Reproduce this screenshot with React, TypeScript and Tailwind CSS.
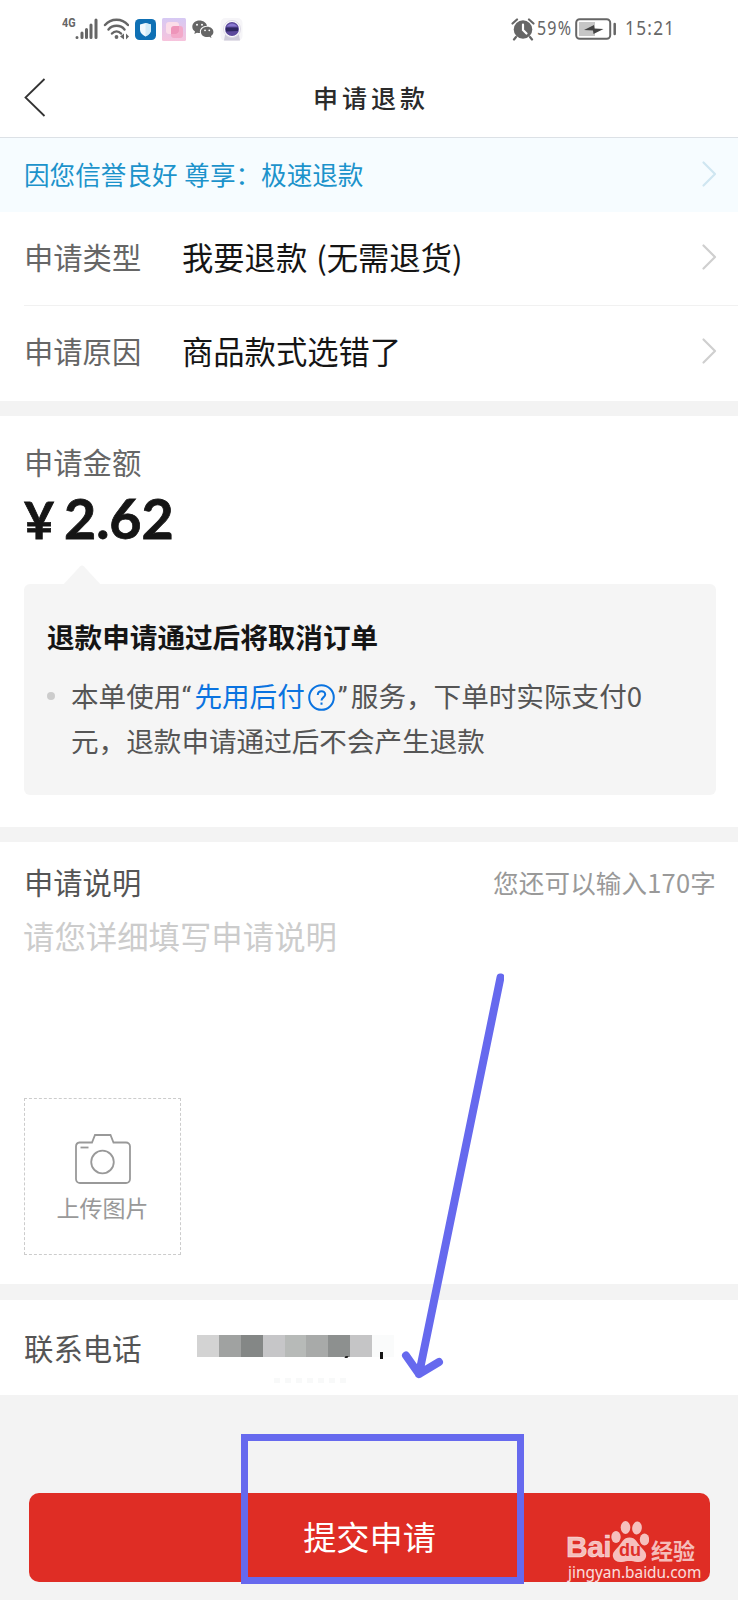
import type React from "react";

interface ChevronProps {
  className?: string;
}

interface FormRowProps {
  label: string;
  value: string;
}

interface DividerProps {
  className?: string;
}

const MOSAIC = [
  "bg-[#d3d3d3]",
  "bg-[#a0a2a1]",
  "bg-[#848786]",
  "bg-[#c6c6c8]",
  "bg-[#b7bab8]",
  "bg-[#a8aaa9]",
  "bg-[#8d908f]",
  "bg-[#c5c5c6]",
  "bg-[#fafbfb]",
];

function Chevron({ className }: ChevronProps): React.ReactNode {
  return (
    <svg width="16" height="28" viewBox="0 0 16 28" fill="none" className={className}>
      <path
        d="M2.500 2.500 14 14 2.500 25.500"
        stroke="currentColor"
        strokeWidth="2.200"
        strokeLinecap="round"
        strokeLinejoin="round"
      />
    </svg>
  );
}

function StatusBar(): React.ReactNode {
  return (
    <div className="flex h-[60px] items-start justify-between pl-[62px] pr-[64px] pt-[17px] text-[#666]">
      <div className="flex items-start">
        <span className="w-[13px] origin-left scale-x-90 font-['Roboto'] text-[12px] font-bold leading-[13px]">4G</span>
        <svg width="24" height="24" viewBox="0 0 24 24" stroke="currentColor" strokeWidth="3" strokeLinecap="round">
          <path d="M2 20.500v0M7 16v4.500M11.500 12.500v8M16 8v12.500M21 3v17.500" />
        </svg>
        <svg width="26" height="24" viewBox="0 0 26 24" fill="none" stroke="currentColor" strokeWidth="2.400" strokeLinecap="round" className="ml-[4px]">
          <path d="M2 8C8 1 19 1 25 8M5.500 12.500c4-5 12-5 16 0M9 16.500c2.500-2.800 6.500-2.800 9 0" />
          <circle cx="13.500" cy="20" r="1.900" fill="currentColor" stroke="none" />
          <path d="M21 16.500v6l-4-3zM23 16.500v6l3-3z" fill="currentColor" stroke="none" />
        </svg>
        <svg width="22" height="24" viewBox="0 0 22 24" className="ml-[6px]">
          <rect y="2" width="21" height="21" rx="4.500" fill="#0f70b4" />
          <path d="M10.500 6 16 7.500v5.500c0 3-2.500 5-5.500 6.500C7.500 18 5 16 5 13V7.500z" fill="#f2fafe" />
          <path d="M10.500 6 16 7.500v5.500c0 3-2.500 5-5.500 6.500z" fill="#d3ecf8" />
        </svg>
        <svg width="24" height="25" viewBox="0 0 24 25" className="ml-[5px]">
          <defs>
            <linearGradient id="pinkTile" x1="0" y1="0" x2="0" y2="1">
              <stop offset="0" stopColor="#d6c9f4" />
              <stop offset="1" stopColor="#f7c3dc" />
            </linearGradient>
          </defs>
          <rect y="1" width="24" height="23" rx="1.500" fill="url(#pinkTile)" />
          <rect x="9" y="9" width="12" height="12" rx="3" fill="#f3a9c9" />
          <rect x="4" y="5" width="13" height="12" rx="3" fill="#fbdde9" />
          <path d="M9 17v-5a3 3 0 0 1 3-3h5v5a3 3 0 0 1-3 3z" fill="#ee95ba" />
        </svg>
        <svg width="22" height="24" viewBox="0 0 22 24" fill="currentColor" className="ml-[6px]">
          <path d="M7.500 3.500C3.400 3.500.3 6.200.3 9.700c0 2 1 3.700 2.700 4.800L2.300 17l2.700-1.300c.9.200 1.700.3 2.500.3h.5c-.8-4.300 2.600-7.300 7-7.300C14.300 5.600 11.200 3.500 7.500 3.500z" />
          <path d="M15.200 9.800c-3.500 0-6.300 2.200-6.300 5.100s2.800 5.100 6.300 5.100c.7 0 1.400-.1 2-.3l2.300 1.200-.6-2c1.600-1 2.500-2.400 2.500-4 0-2.900-2.700-5.100-6.200-5.100z" />
          <g fill="#fff">
            <circle cx="5" cy="7.800" r="1" />
            <circle cx="10" cy="7.800" r="1" />
            <circle cx="13" cy="13.300" r=".9" />
            <circle cx="17.300" cy="13.300" r=".9" />
          </g>
        </svg>
        <svg width="24" height="26" viewBox="0 0 24 26" className="ml-[6px]">
          <rect x=".5" y="1" width="22" height="23" rx="5" fill="#f6f5f8" />
          <path d="M5 18h14l1 5.500H4z" fill="#cfccda" />
          <circle cx="12" cy="12" r="8.500" fill="#fff" stroke="#dddbe6" />
          <circle cx="12" cy="12" r="7" fill="#5c4a9c" />
          <path d="M6.500 9.500c3-4 8-4 11 0z" fill="#8878d0" />
          <path d="M6 10.500h12v3.500l-12 .500z" fill="#2d2660" />
        </svg>
      </div>
      <div className="flex items-start font-['Noto_Sans'] text-[20px] leading-[22px]">
        <svg width="24" height="24" viewBox="0 0 24 24" fill="currentColor">
          <circle cx="12" cy="12.500" r="9.300" />
          <path d="M1.500 6.500 6 2.500M18 2.500l4.500 4M5 20l-2 2.500M19 20l2 2.500" stroke="currentColor" strokeWidth="2.200" strokeLinecap="round" />
          <path d="M12 7.500v5.500l3.500 3.500" fill="none" stroke="#fff" strokeWidth="2.200" strokeLinecap="round" />
        </svg>
        <span className="ml-[2px] w-[37px] origin-left scale-x-[0.8] whitespace-nowrap tracking-[1.5px]">59%</span>
        <svg width="42" height="24" viewBox="0 0 42 24" className="ml-[1px]">
          <rect x="1.200" y="2.200" width="34" height="19.500" rx="3.500" fill="#fff" stroke="currentColor" strokeWidth="2" />
          <rect x="4" y="5" width="16" height="14" fill="#c6c6c6" />
          <path d="m9 13 10-5 .5 3.500L28.500 12l-10 5-.5-3.500z" fill="#444" />
          <path d="M39.700 7v10" stroke="currentColor" strokeWidth="2.500" strokeLinecap="round" />
        </svg>
        <span className="ml-[8px] w-[49px] origin-left scale-x-[0.86] whitespace-nowrap tracking-[1.5px]">15:21</span>
      </div>
    </div>
  );
}

function FormRow({ label, value }: FormRowProps): React.ReactNode {
  return (
    <div className="ml-6 flex h-[94px] items-center pb-[4px] pr-[21px]">
      <span className="w-[158px] text-[29.300px] text-[#666]">{label}</span>
      <span className="flex-1 text-[31.300px] text-[#151515] [word-spacing:2px]">{value}</span>
      <Chevron className="text-[#cfcfcf]" />
    </div>
  );
}

function Divider({ className = "h-[15px]" }: DividerProps): React.ReactNode {
  return <div className={`bg-[#f3f3f3] ${className}`} />;
}

function Watermark(): React.ReactNode {
  return (
    <div className="absolute left-[566px] top-[1519px] w-[134px] text-white/70">
      <div className="flex h-[44px] items-end">
        <span className="w-[45px] whitespace-nowrap font-['Liberation_Sans'] text-[30px] font-bold leading-[32px] tracking-[-0.5px] [-webkit-text-stroke:0.5px_currentColor]">
          Bai
        </span>
        <span className="relative h-[44px] w-[38px]">
          <svg width="38" height="44" viewBox="0 0 38 44" fill="currentColor">
            <ellipse cx="5" cy="18" rx="4.700" ry="6" />
            <ellipse cx="14.500" cy="8.500" rx="4.800" ry="6.500" />
            <ellipse cx="26" cy="9" rx="4.800" ry="6.500" transform="rotate(8 26 9)" />
            <ellipse cx="33.500" cy="20.500" rx="4.700" ry="6" />
            <path d="M18.500 18.500c6 0 7.500 5 11 9 3 3.500 6.500 6 5.500 10.500-1 4-4.500 5.500-9 5-3-.4-5-1-7.500-1s-4.500.6-7.500 1c-4.500.5-8-1-9-5-1-4.500 2.500-7 5.500-10.500 3.500-4 5-9 11-9z" />
          </svg>
          <span className="absolute left-[8px] top-[19px] font-['Liberation_Sans'] text-[18px] font-bold leading-[24px] text-[#df2f28]">
            du
          </span>
        </span>
        <span className="ml-[2px] whitespace-nowrap text-[22px] font-bold leading-[28px]">经验</span>
      </div>
      <p className="ml-[2px] whitespace-nowrap font-['Noto_Sans'] text-[15.400px] leading-[20px] text-white/85">
        jingyan.baidu.com
      </p>
    </div>
  );
}

export default function App(): React.ReactNode {
  return (
    <div className="relative h-[1600px] w-[738px] overflow-hidden bg-[#f3f3f3] font-['Noto_Sans_CJK_SC',sans-serif] leading-none">
      <div className="bg-white">
        <StatusBar />
        <header className="relative flex h-[78px] items-center justify-center border-b border-[#dce1e6]">
          <svg width="24" height="42" viewBox="0 0 24 42" fill="none" className="absolute left-[23px] top-[17px]">
            <path d="M21.500 2 2.500 20.500 21.500 39" stroke="#333" strokeWidth="1.800" />
          </svg>
          <h1 className="pb-[2px] pl-[4px] text-[25px] font-medium tracking-[4px] text-[#2b2b2b]">申请退款</h1>
        </header>
      </div>

      <div className="flex h-[74px] items-center justify-between bg-[#f6fcff] pb-[3px] pl-6 pr-[21px] text-[25.600px] text-[#1c93cb]">
        <span className="[word-spacing:1px]">因您信誉良好 尊享：极速退款</span>
        <Chevron className="text-[#cfe6f1]" />
      </div>

      <section className="bg-white pb-px">
        <FormRow label="申请类型" value="我要退款 (无需退货)" />
        <div className="-mt-px ml-6 h-px bg-[#f1f1f1]" />
        <FormRow label="申请原因" value="商品款式选错了" />
      </section>
      <Divider />

      <section className="h-[411px] bg-white px-6 pt-[31px]">
        <h2 className="text-[29.300px] text-[#666]">申请金额</h2>
        <div className="mt-[11px] flex h-[62px] items-baseline font-['Lato'] font-bold leading-[62px] text-[#151515] [-webkit-text-stroke:0.8px_currentColor]">
          <span className="w-[40px] text-[52px]">¥</span>
          <span className="text-[55.500px]">2.62</span>
        </div>
        <div className="relative mt-[34.700px] h-[211px] w-[692px] rounded-md bg-[#f5f5f5] px-6 pt-[39px]">
          <svg width="38" height="20" viewBox="0 0 38 20" className="absolute left-[39px] top-[-19px]">
            <path d="M0 20 17 1.500q2-2 4 0L38 20z" fill="#f5f5f5" />
          </svg>
          <h3 className="-ml-px text-[27.600px] font-bold text-[#151515]">退款申请通过后将取消订单</h3>
          <div className="-ml-px mt-[23px] flex">
            <span className="mt-[18px] h-[8px] w-[8px] rounded-full bg-[#ccc]" />
            <p className="ml-[16px] whitespace-nowrap text-[27.600px] leading-[43.500px] text-[#555]">
              本单使用
              <span className="inline-block w-[13px] font-['Roboto']">“</span>
              <span className="text-[#0a73e0]">
                先用后付
                <svg width="27" height="27" viewBox="0 0 27 27" fill="none" stroke="currentColor" strokeWidth="2" className="mx-[3px] inline-block align-[-4px]">
                  <circle cx="13.500" cy="13.500" r="12.300" />
                  <path d="M9.800 11c0-5 7.400-5 7.400-.500 0 2.800-3.700 3-3.700 6M13.500 18.500v2.300" />
                </svg>
              </span>
              <span className="inline-block w-[13px] font-['Roboto']">”</span>
              服务，下单时实际支付0
              <br />
              元，退款申请通过后不会产生退款
            </p>
          </div>
        </div>
      </section>
      <Divider />

      <section className="h-[442px] bg-white px-6 pt-[25px]">
        <div className="flex items-center justify-between">
          <h2 className="text-[29.300px] text-[#555]">申请说明</h2>
          <span className="-mr-[2px] text-[25.500px] tracking-[0.2px] text-[#999]">您还可以输入170字</span>
        </div>
        <p className="-ml-px mt-[24px] text-[31.400px] text-[#ccc]">请您详细填写申请说明</p>
        <div className="mt-[146px] flex h-[157px] w-[157px] flex-col items-center border border-dashed border-[#ccc] pt-[35px] text-[#999]">
          <svg width="56" height="50" viewBox="0 0 56 50" fill="none" stroke="currentColor" strokeWidth="1.800">
            <path d="M4.500 8.500H17l3-7.500h15.500l3 7.500H51a4 4 0 0 1 4 4V45a4 4 0 0 1-4 4H5a4 4 0 0 1-4-4V12.500a4 4 0 0 1 3.500-4z" />
            <circle cx="27.500" cy="28" r="11.300" />
            <path d="M5.500 13.500h8" />
          </svg>
          <span className="mt-[12px] text-[23px]">上传图片</span>
        </div>
      </section>
      <Divider className="h-[16px]" />

      <section className="flex h-[95px] items-center bg-white pl-6">
        <h2 className="w-[173px] text-[29.400px] text-[#555]">联系电话</h2>
        <div className="relative -mt-[3px] flex h-[22px]">
          {MOSAIC.map((tone) => (
            <span key={tone} className={`h-[22px] w-[21.900px] ${tone}`} />
          ))}
          <span className="absolute left-[148px] top-[21px] h-[2px] w-[3px] -skew-x-[30deg] bg-[#222]" />
          <span className="absolute left-[183px] top-[17px] h-[7px] w-[3px] bg-[#151515]" />
          <div className="absolute left-[77px] top-[43px] flex gap-[5px]">
            {[0, 1, 2, 3, 4, 5, 6].map((dot) => (
              <span key={dot} className="h-[5px] w-[6px] bg-[#f8f9f9]" />
            ))}
          </div>
        </div>
      </section>

      <div className="px-[29px] pt-[98px]">
        <button className="flex h-[89px] w-[681px] items-center justify-center rounded-[10px] bg-[#df2d25] pb-[3px] text-[33.200px] text-white">
          提交申请
        </button>
      </div>

      <Watermark />

      <div className="absolute left-[241px] top-[1434px] h-[150px] w-[283px] border-[7px] border-[#6669ee]" />
      <svg width="108" height="416" viewBox="0 0 108 416" fill="none" className="absolute left-[396px] top-[970px]">
        <path
          d="M104.500 7.500 23 404M10 385.500l13 18.500 20-12"
          stroke="#6669ee"
          strokeWidth="8"
          strokeLinecap="round"
          strokeLinejoin="round"
        />
      </svg>
    </div>
  );
}
